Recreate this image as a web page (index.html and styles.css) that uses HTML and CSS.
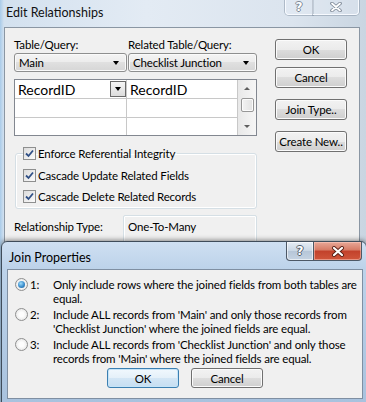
FILE: index.html
```html
<!doctype html>
<html>
<head>
    <meta charset="utf-8">
    <title>Edit Relationships</title>
    <link rel="stylesheet" href="styles.css">
</head>
<body>
    <div class="window">
        <div class="caption">
            <span class="caption-title">Edit Relationships</span>
            <div class="caption-btns">
                <span class="cbtn help">?</span>
                <span class="cbtn close">
                    <svg width="14" height="10" viewBox="0 0 14 10"><path d="M3 1.5 L11 8.5 M11 1.5 L3 8.5" stroke="#7d8896" stroke-width="3.6" stroke-linecap="round"/><path d="M3 1.5 L11 8.5 M11 1.5 L3 8.5" stroke="#fff" stroke-width="1.8" stroke-linecap="round"/></svg>
                </span>
            </div>
        </div>
        <div class="client">
            <div class="main-col">
                <div class="labels">
                    <span class="label-left">Table/Query:</span>
                    <span>Related Table/Query:</span>
                </div>
                <div class="combos">
                    <div class="combo combo-left">Main<i class="arrow"></i></div>
                    <div class="combo combo-right">Checklist Junction<i class="arrow"></i></div>
                </div>
                <div class="fields">
                    <div class="cells">
                        <div class="cell">RecordID<span class="cell-drop"><i class="arrow"></i></span></div>
                        <div class="cell">RecordID</div>
                        <div class="cell"></div>
                        <div class="cell"></div>
                        <div class="cell"></div>
                        <div class="cell"></div>
                    </div>
                    <div class="vscroll">
                        <span class="sb-btn"><i class="tri-up"></i></span>
                        <span class="sb-thumb"></span>
                        <span class="sb-btn sb-bottom"><i class="tri-down"></i></span>
                    </div>
                </div>
                <fieldset class="group">
                    <legend>
                        <label class="check"><span class="box"><svg width="11" height="11" viewBox="0 0 11 11"><path d="M2 5.5 L4.5 8 L9 2.5" fill="none" stroke="#2f4f86" stroke-width="1.8"/></svg></span>Enforce Referential Integrity</label>
                    </legend>
                    <div class="checks">
                        <label class="check"><span class="box"><svg width="11" height="11" viewBox="0 0 11 11"><path d="M2 5.5 L4.5 8 L9 2.5" fill="none" stroke="#2f4f86" stroke-width="1.8"/></svg></span>Cascade Update Related Fields</label>
                        <label class="check"><span class="box"><svg width="11" height="11" viewBox="0 0 11 11"><path d="M2 5.5 L4.5 8 L9 2.5" fill="none" stroke="#2f4f86" stroke-width="1.8"/></svg></span>Cascade Delete Related Records</label>
                    </div>
                </fieldset>
                <div class="reltype">
                    <span class="reltype-label">Relationship Type:</span>
                    <div class="reltype-box">One-To-Many</div>
                </div>
            </div>
            <div class="side">
                <button class="btn">OK</button>
                <button class="btn">Cancel</button>
                <button class="btn spaced">Join Type..</button>
                <button class="btn spaced">Create New..</button>
            </div>
        </div>
    </div>

    <div class="join">
        <div class="join-caption">
            <span class="join-title">Join Properties</span>
            <div class="join-btns">
                <span class="jbtn help">?</span>
                <span class="jbtn close">
                    <svg width="14" height="11" viewBox="0 0 14 11"><path d="M3 2 L11 9 M11 2 L3 9" stroke="#5a2016" stroke-width="4" stroke-linecap="round"/><path d="M3 2 L11 9 M11 2 L3 9" stroke="#fff" stroke-width="2.2" stroke-linecap="round"/></svg>
                </span>
            </div>
        </div>
        <div class="join-body">
            <div class="options">
                <div class="opt">
                    <span class="radio on"></span>
                    <span class="opt-num">1:</span>
                    <span class="opt-text">Only include rows where the joined fields from both tables are<br>equal.</span>
                </div>
                <div class="opt">
                    <span class="radio"></span>
                    <span class="opt-num">2:</span>
                    <span class="opt-text">Include ALL records from 'Main' and only those records from<br>'Checklist Junction' where the joined fields are equal.</span>
                </div>
                <div class="opt">
                    <span class="radio"></span>
                    <span class="opt-num">3:</span>
                    <span class="opt-text">Include ALL records from 'Checklist Junction' and only those<br>records from 'Main' where the joined fields are equal.</span>
                </div>
            </div>
            <div class="join-actions">
                <button class="btn default">OK</button>
                <button class="btn">Cancel</button>
            </div>
        </div>
    </div>
</body>
</html>
```

FILE: styles.css
```css
html,
body {
    margin: 0;
}

body {
    position: relative;
    width: 366px;
    height: 402px;
    overflow: hidden;
    font: 11.5px/15px Lato, "Noto Sans", sans-serif;
    letter-spacing: -0.15px;
    color: #000;
    background: linear-gradient(90deg, #a9cbe9 0, #d3e1ef 4px, #e3ebf4 40%, #dbe4ee 80%, #c9d5e1 100%);
}

/* back window: Edit Relationships */

.caption {
    height: 27px;
    display: flex;
    justify-content: space-between;
    align-items: flex-start;
}

.caption-title {
    padding: 5px 0 0 6px;
    font-size: 12.5px;
    letter-spacing: 0;
    color: #111;
}

.caption-btns {
    display: flex;
    margin-right: 7px;
}

.cbtn {
    height: 15px;
    box-sizing: border-box;
    display: flex;
    align-items: center;
    justify-content: center;
    border: 1px solid #f7faff;
    border-top: 0;
    box-shadow: 0 0 0 1px rgba(120, 136, 152, .45);
    background: rgba(235, 241, 248, .35);
}

.cbtn.help {
    width: 28px;
    border-radius: 0 0 0 4px;
    font: bold 12px/12px "DejaVu Sans", sans-serif;
    color: #fff;
    text-shadow: 1px 0 #7d8896, -1px 0 #7d8896, 0 1px #7d8896, 0 -1px #7d8896;
}

.cbtn.close {
    width: 46px;
    border-left: 0;
    border-radius: 0 0 4px 0;
}

.client {
    margin: 0 6px 0 4px;
    height: 240px;
    box-sizing: border-box;
    border: 1px solid #8a96a3;
    background: #f0f0f0;
    display: flex;
    gap: 18px;
    padding: 9px 12px 0 9px;
}

.main-col {
    width: 243px;
}

.labels {
    display: flex;
    height: 15px;
}

.label-left {
    width: 114px;
}

.combos {
    display: flex;
    gap: 1px;
    margin-top: 1px;
}

.combo {
    position: relative;
    height: 19px;
    box-sizing: border-box;
    padding: 1px 0 0 4px;
    border: 1px solid #8e8f8f;
    border-radius: 3px;
    background: linear-gradient(#f4f4f4 0, #ececec 50%, #e0e0e0 50%, #d6d6d6 100%);
    box-shadow: inset 0 0 0 1px #fafafa;
}

.combo-left {
    width: 113px;
}

.combo-right {
    width: 129px;
}

.arrow {
    display: block;
    width: 0;
    height: 0;
    border-left: 3.5px solid transparent;
    border-right: 3.5px solid transparent;
    border-top: 4px solid #000;
}

.combo .arrow {
    position: absolute;
    right: 7px;
    top: 7px;
}

.fields {
    display: flex;
    margin-top: 7px;
    height: 57px;
    box-sizing: border-box;
    border: 1px solid #828790;
    background: #fff;
    overflow: hidden;
}

.cells {
    display: grid;
    grid-template-columns: 112px 111px;
    grid-auto-rows: 19px;
}

.cell {
    display: flex;
    justify-content: space-between;
    align-items: center;
    padding-left: 3px;
    border-right: 1px solid #c8c8c8;
    border-bottom: 1px solid #c8c8c8;
    font-size: 14px;
    letter-spacing: 0;
}

.cell-drop {
    width: 16px;
    height: 16px;
    box-sizing: border-box;
    display: flex;
    align-items: center;
    justify-content: center;
    border: 1px solid #6a6a6a;
    background: linear-gradient(#f6f6f6, #dcdcdc);
}

.vscroll {
    flex: 1;
    display: flex;
    flex-direction: column;
    align-items: center;
    background: linear-gradient(90deg, #e8e8e8, #f6f6f6);
}

.sb-btn {
    height: 17px;
    display: flex;
    align-items: center;
}

.sb-bottom {
    margin-top: auto;
}

.tri-up,
.tri-down {
    width: 0;
    height: 0;
    border-left: 3px solid transparent;
    border-right: 3px solid transparent;
}

.tri-up {
    border-bottom: 3px solid #5e5e5e;
}

.tri-down {
    border-top: 3px solid #5e5e5e;
}

.sb-thumb {
    width: 13px;
    height: 14px;
    margin-top: 1px;
    margin-left: 1px;
    box-sizing: border-box;
    border: 1px solid #979797;
    border-radius: 2px;
    background: linear-gradient(90deg, #f3f3f3, #e2e2e2);
    box-shadow: inset 0 0 0 1px #fbfbfb;
}

.group {
    margin: 10px 0 0 1px;
    width: 242px;
    box-sizing: border-box;
    padding: 8px 0 5px 7px;
    border: 1px solid #d5dfe5;
    border-radius: 3px;
    box-shadow: inset 0 0 0 1px #fff;
}

.group legend {
    padding: 0 2px 0 0;
}

.checks {
    display: flex;
    flex-direction: column;
    gap: 7px;
}

.check {
    display: flex;
    align-items: center;
    gap: 2px;
    height: 14px;
}

.box {
    flex-shrink: 0;
    width: 13px;
    height: 13px;
    box-sizing: border-box;
    border: 1px solid #8e8f8f;
    background: linear-gradient(135deg, #dcdcdc, #fbfbfb);
    display: flex;
}

.reltype {
    display: flex;
    margin-top: 6px;
}

.reltype-label {
    width: 109px;
    padding-top: 4px;
}

.reltype-box {
    width: 134px;
    height: 28px;
    box-sizing: border-box;
    padding: 3px 0 0 4px;
    border: 1px solid #d5dfe5;
    border-radius: 2px;
    box-shadow: inset 0 0 0 1px #fff;
}

.side {
    width: 72px;
    padding-top: 2px;
}

.btn {
    display: block;
    width: 72px;
    height: 21px;
    padding: 0;
    box-sizing: border-box;
    border: 1px solid #707070;
    border-radius: 3px;
    background: linear-gradient(#f2f2f2 0, #ebebeb 50%, #dddddd 50%, #cfcfcf 100%);
    box-shadow: inset 0 0 0 1px #fbfbfb;
    font: inherit;
    letter-spacing: inherit;
    color: #000;
}

.side .btn + .btn {
    margin-top: 7px;
}

.side .btn.spaced {
    margin-top: 11px;
}

/* front window: Join Properties */

.join {
    position: absolute;
    left: 1px;
    top: 241px;
    width: 366px;
    height: 170px;
    box-sizing: border-box;
    border: 1px solid #3f4c5a;
    border-radius: 6px 6px 0 0;
    background: linear-gradient(#cfe0f2 0, #bdd3ea 26px, #a7c1dd 100%);
    box-shadow: 0 -1px 5px rgba(0, 0, 0, .45);
}

.join-caption {
    height: 27px;
    display: flex;
    justify-content: space-between;
    align-items: flex-start;
}

.join-title {
    padding: 8px 0 0 7px;
    font-size: 12.5px;
    letter-spacing: 0;
}

.join-btns {
    display: flex;
    margin-right: 4px;
}

.jbtn {
    height: 19px;
    box-sizing: border-box;
    display: flex;
    align-items: center;
    justify-content: center;
    border: 1px solid #4d5866;
    border-top: 0;
}

.jbtn.help {
    width: 28px;
    border-radius: 0 0 0 4px;
    background: linear-gradient(#e6edf5, #c9d6e4 50%, #b6c6d8 51%, #c5d3e2);
    box-shadow: inset 0 0 0 1px rgba(255, 255, 255, .6);
    font: bold 12px/12px "DejaVu Sans", sans-serif;
    color: #fff;
    text-shadow: 1px 0 #56606c, -1px 0 #56606c, 0 1px #56606c, 0 -1px #56606c;
}

.jbtn.close {
    width: 48px;
    border-left: 0;
    border-radius: 0 0 4px 0;
    background: linear-gradient(#e8a898, #d67a64 45%, #c2412b 50%, #d0563b 100%);
    box-shadow: inset 0 0 0 1px rgba(255, 210, 200, .5);
}

.join-body {
    margin: 0 3px 0 5px;
    height: 130px;
    box-sizing: border-box;
    border: 1px solid #7f8fa2;
    background: #f0f0f0;
    padding-top: 8px;
}

.options {
    display: flex;
    flex-direction: column;
    gap: 2px;
    padding-left: 7px;
}

.opt {
    display: flex;
    align-items: flex-start;
    line-height: 14px;
}

.radio {
    position: relative;
    flex-shrink: 0;
    width: 13px;
    height: 13px;
    box-sizing: border-box;
    border: 1px solid #8e8f8f;
    border-radius: 50%;
    background: radial-gradient(circle at 50% 50%, #fdfdfd 30%, #dedede);
}

.radio.on::after {
    content: "";
    position: absolute;
    left: 2px;
    top: 2px;
    width: 7px;
    height: 7px;
    border-radius: 50%;
    background: radial-gradient(circle at 40% 35%, #9fdcfb 0, #3a8dcc 55%, #1d5a90 100%);
}

.opt-num {
    flex-shrink: 0;
    width: 23px;
    margin-left: 2px;
}

.opt-text {
    white-space: nowrap;
}

.join-actions {
    display: flex;
    justify-content: center;
    gap: 12px;
    margin-top: 2px;
}

.join-actions .btn {
    height: 20px;
}

.btn.default {
    border-color: #3c7fb1;
    background: linear-gradient(#f1f8fd 0, #e4f0f9 50%, #d3e6f5 50%, #c6def2 100%);
    box-shadow: inset 0 0 0 1px #c5e4f8;
}
```
